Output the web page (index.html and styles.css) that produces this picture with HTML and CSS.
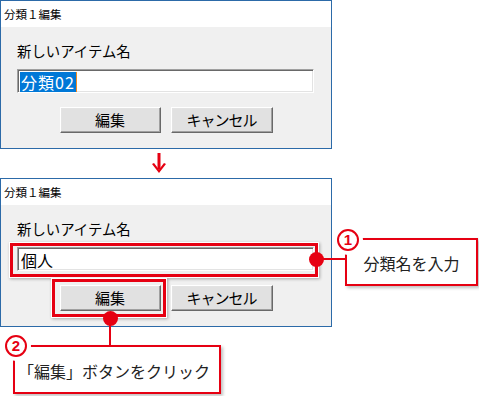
FILE: index.html
```html
<!DOCTYPE html>
<html lang="ja">
<head>
<meta charset="utf-8">
<link rel="stylesheet" href="styles.css">
</head>
<body>
<div class="page">
  <div class="dialog">
    <div class="titlebar">分類１編集</div>
    <div class="dbody">
      <div class="label">新しいアイテム名</div>
      <div class="input"><span class="sel">分類02</span><span class="caret"></span></div>
      <div class="buttons">
        <div class="btn">編集</div>
        <div class="btn narrow">キャンセル</div>
      </div>
    </div>
  </div>

  <div class="arrow-row">
    <svg class="arrow" width="16" height="21" viewBox="0 0 16 21">
      <rect x="6.5" y="0" width="3" height="16" fill="#e60012"/>
      <path d="M1 11 L8 20 L15 11 L13 10 L8 16.5 L3 10 Z" fill="#e60012"/>
    </svg>
  </div>

  <div class="dialog">
    <div class="titlebar">分類１編集</div>
    <div class="dbody">
      <div class="label">新しいアイテム名</div>
      <div class="input"><span class="plain">個人</span></div>
      <div class="buttons">
        <div class="btn">編集</div>
        <div class="btn narrow">キャンセル</div>
      </div>
    </div>
  </div>

  <div class="hl hl-input"></div>
  <div class="hl hl-btn"></div>

  <div class="line line1"></div>
  <div class="line line2"></div>
  <div class="dot dot1"></div>
  <div class="dot dot2"></div>

  <div class="callout c1">分類名を入力</div>
  <div class="callout c2">「編集」ボタンをクリック</div>
  <div class="num n1">1</div>
  <div class="num n2">2</div>
</div>
</body>
</html>
```

FILE: styles.css
```css
html, body {
  margin: 0;
  padding: 0;
  background: #fff;
}
body {
  width: 479px;
  height: 396px;
  overflow: hidden;
  font-family: "Noto Sans CJK JP", "Noto Sans", sans-serif;
  color: #000;
}
.page {
  position: relative;
  width: 479px;
  height: 396px;
}
.dialog {
  width: 332px;
  height: 149px;
  box-sizing: border-box;
  border: 1px solid #2c6aa8;
  background: #f0f0f0;
  display: flex;
  flex-direction: column;
}
.titlebar {
  height: 26px;
  background: #fff;
  font-size: 11.5px;
  line-height: 26px;
  padding-left: 3px;
  color: #000;
}
.dbody {
  padding: 14px 16px 0 16px;
  display: flex;
  flex-direction: column;
}
.label {
  font-size: 14.4px;
  line-height: 20px;
  height: 20px;
}
.input {
  margin-top: 8px;
  width: 297px;
  height: 24px;
  box-sizing: border-box;
  background: #fff;
  border: 1px solid;
  border-color: #a0a0a0 #ffffff #ffffff #a0a0a0;
  box-shadow: inset 1px 1px 0 #696969, inset -1px -1px 0 #e3e3e3;
  padding: 2px 0 0 2px;
  display: flex;
  align-items: stretch;
  font-size: 16px;
}
.sel {
  background: #0078d7;
  color: #fff;
  line-height: 20px;
  padding: 0 1px;
  letter-spacing: 1px;
}
.caret {
  width: 1px;
  background: #f08a24;
  height: 20px;
}
.plain {
  line-height: 20px;
  padding-left: 1px;
}
.buttons {
  margin-top: 14px;
  display: flex;
  justify-content: center;
  gap: 10px;
}
.btn {
  width: 101px;
  height: 26px;
  box-sizing: border-box;
  background: #e1e1e1;
  border: 1px solid;
  border-color: #ffffff #696969 #696969 #ffffff;
  box-shadow: inset -1px -1px 0 #a0a0a0, inset 1px 1px 0 #e3e3e3;
  font-size: 15px;
  line-height: 23px;
  text-align: center;
}
.btn.narrow {
  width: 102px;
  letter-spacing: -1px;
}
.arrow-row {
  height: 29px;
  box-sizing: border-box;
  padding: 4px 0 0 151px;
}
.arrow {
  display: block;
}
.hl {
  position: absolute;
  box-sizing: border-box;
  border: 3px solid #e60012;
  box-shadow: 0 0 0 1px #fff, 1px 1px 3px 1px rgba(0, 0, 0, 0.3);
}
.hl-input {
  left: 10px;
  top: 243px;
  width: 308px;
  height: 34px;
}
.hl-btn {
  left: 52px;
  top: 279px;
  width: 114px;
  height: 38px;
}
.line {
  position: absolute;
  background: #e60012;
}
.line1 {
  left: 316px;
  top: 258px;
  width: 31px;
  height: 2px;
}
.line2 {
  left: 109px;
  top: 318px;
  width: 2px;
  height: 29px;
}
.dot {
  position: absolute;
  width: 15px;
  height: 15px;
  border-radius: 50%;
  background: #e60012;
}
.dot1 {
  left: 309px;
  top: 252px;
}
.dot2 {
  left: 103px;
  top: 311px;
}
.callout {
  position: absolute;
  box-sizing: border-box;
  border: 2px solid #e60012;
  background: #fff;
  box-shadow: 2px 2px 3px rgba(0, 0, 0, 0.25);
  display: flex;
  align-items: center;
  justify-content: center;
  font-size: 16px;
  color: #222;
}
.c1 {
  left: 345px;
  top: 238px;
  width: 133px;
  height: 48px;
  padding-top: 2px;
}
.c2 {
  left: 13px;
  top: 345px;
  width: 208px;
  height: 49px;
  padding: 2px 6px 0 0;
}
.num {
  position: absolute;
  box-sizing: border-box;
  width: 22px;
  height: 22px;
  border-radius: 50%;
  border: 2px solid #e60012;
  background: #fff;
  box-shadow: 0 0 0 4px #fff;
  color: #e60012;
  font-family: "Liberation Sans", "Noto Sans", sans-serif;
  font-weight: bold;
  font-size: 15px;
  line-height: 18px;
  text-align: center;
}
.n1 {
  left: 337px;
  top: 229px;
}
.n2 {
  left: 5px;
  top: 335px;
}
```
